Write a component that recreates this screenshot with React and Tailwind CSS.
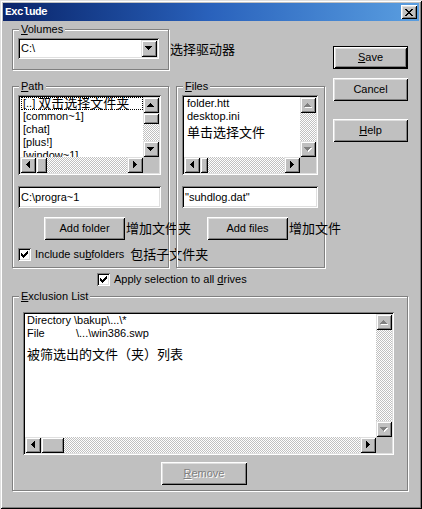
import React from 'react';

const SUNKEN = 'shadow-[inset_1px_1px_0_#808080,inset_-1px_-1px_0_#fff,inset_2px_2px_0_#000,inset_-2px_-2px_0_#dfdfdf]';
const RAISED = 'shadow-[inset_1px_1px_0_#fff,inset_-1px_-1px_0_#000,inset_2px_2px_0_#dfdfdf,inset_-2px_-2px_0_#808080]';
const SCROLL_BTN = 'shadow-[inset_1px_1px_0_#dfdfdf,inset_-1px_-1px_0_#000,inset_2px_2px_0_#fff,inset_-2px_-2px_0_#808080]';
const DITHER = 'bg-[image:repeating-conic-gradient(#fff_0_25%,#c0c0c0_0_50%)] bg-[length:2px_2px]';

const GLYPHS = {
    up: { w: 7, h: 4, d: 'M3 0h1v1h1v1h1v1h1v1H0V3h1V2h1V1h1z' },
    down: { w: 7, h: 4, d: 'M0 0h7v1H6v1H5v1H4v1H3V3H2V2H1V1H0z' },
    left: { w: 4, h: 7, d: 'M3 0h1v7H3V6H2V5H1V4H0V3h1V2h1V1h1z' },
    right: { w: 4, h: 7, d: 'M0 0h1v1h1v1h1v1h1v1H3v1H2v1H1v1H0z' },
};

const CHECK = 'M6 0h1v1H6zM5 1h2v1H5zM0 2h1v1H0zM4 2h3v1H4zM0 3h2v1H0zM3 3h3v1H3zM0 4h5v1H0zM1 5h3v1H1zM2 6h1v1H2z';
const CLOSE_X = 'M0 0h2v1H0zM6 0h2v1H6zM1 1h2v1H1zM5 1h2v1H5zM2 2h4v1H2zM3 3h2v1H3zM2 4h4v1H2zM1 5h2v1H1zM5 5h2v1H5zM0 6h2v1H0zM6 6h2v1H6z';

function Glyph({ dir, disabled }) {
    const g = GLYPHS[dir];
    return (
        <svg width={g.w + 1} height={g.h + 1} shapeRendering="crispEdges">
            {disabled && <path d={g.d} fill="#fff" transform="translate(1 1)" />}
            <path d={g.d} fill={disabled ? '#808080' : '#000'} />
        </svg>
    );
}

function Arrow({ dir, disabled }) {
    return (
        <div className={`w-[16px] h-[16px] shrink-0 bg-[#c0c0c0] flex items-center justify-center ${SCROLL_BTN}`}>
            <Glyph dir={dir} disabled={disabled} />
        </div>
    );
}

function VScroll({ thumb, disabled }) {
    return (
        <div className="w-[16px] shrink-0 flex flex-col">
            <Arrow dir="up" disabled={disabled} />
            <div className={`flex-1 ${DITHER}`}>
                {thumb && <div className={`w-[16px] bg-[#c0c0c0] ${SCROLL_BTN} ${thumb}`} />}
            </div>
            <Arrow dir="down" disabled={disabled} />
        </div>
    );
}

function HScroll({ thumb }) {
    return (
        <div className="flex-1 flex h-[16px]">
            <Arrow dir="left" />
            <div className={`flex-1 flex ${DITHER}`}>
                {thumb && <div className={`h-[16px] bg-[#c0c0c0] ${SCROLL_BTN} ${thumb}`} />}
            </div>
            <Arrow dir="right" />
        </div>
    );
}

function ListBox({ className = '', children, vThumb, hThumb, vDisabled }) {
    return (
        <div className={`bg-white p-[2px] flex flex-col shrink-0 ${SUNKEN} ${className}`}>
            <div className="flex flex-1 min-h-0">
                <div className="flex-1 min-w-0 overflow-hidden whitespace-nowrap">{children}</div>
                <VScroll thumb={vThumb} disabled={vDisabled} />
            </div>
            <div className="flex h-[16px] shrink-0">
                <HScroll thumb={hThumb} />
                <div className="w-[16px] bg-[#c0c0c0]" />
            </div>
        </div>
    );
}

function Group({ label, className = '', children }) {
    return (
        <div className={`border border-[#808080] shadow-[inset_1px_1px_0_#fff,1px_1px_0_#fff] flex flex-col shrink-0 ${className}`}>
            <div className="-mt-[7px] ml-[6px] px-[2px] w-fit h-[13px] bg-[#c0c0c0]">{label}</div>
            {children}
        </div>
    );
}

function Btn({ children, className = '', isDefault, disabled }) {
    return (
        <div className={`h-[23px] shrink-0 bg-[#c0c0c0] ${isDefault ? 'border border-black' : ''} ${className}`}>
            <div className={`w-full h-full flex items-center justify-center ${RAISED} ${disabled ? 'text-[#808080] [text-shadow:1px_1px_0_#fff]' : ''}`}>
                {children}
            </div>
        </div>
    );
}

function Check() {
    return (
        <div className={`w-[13px] h-[13px] shrink-0 bg-white flex items-center justify-center ${SUNKEN}`}>
            <svg width="7" height="7" shapeRendering="crispEdges">
                <path d={CHECK} fill="#000" />
            </svg>
        </div>
    );
}

function Cn({ children, className = '' }) {
    return <span className={`text-[13px] whitespace-nowrap ${className}`}>{children}</span>;
}

function Edit({ children, className = '' }) {
    return (
        <div className={`h-[22px] bg-white flex items-center pl-[3px] shrink-0 ${SUNKEN} ${className}`}>
            {children}
        </div>
    );
}

function TitleBar() {
    return (
        <div className="h-[18px] shrink-0 flex items-center px-[2px] bg-linear-to-r from-[#0a246a] via-[#2a62bc] to-[#5a9ee0]">
            <span className="font-['Liberation_Mono',monospace] font-bold text-white text-[11px] tracking-[-0.6px]">
                Exclude
            </span>
            <div className={`ml-auto w-[16px] h-[14px] bg-[#c0c0c0] flex items-center justify-center ${RAISED}`}>
                <svg width="8" height="7" shapeRendering="crispEdges">
                    <path d={CLOSE_X} fill="#000" />
                </svg>
            </div>
        </div>
    );
}

export default function App() {
    return (
        <div className="w-[422px] h-[509px] p-[3px] flex flex-col bg-[#c0c0c0] text-black text-[11px] leading-[13px] font-['Liberation_Sans','Noto_Sans_CJK_SC',sans-serif] shadow-[inset_1px_1px_0_#dfdfdf,inset_-1px_-1px_0_#000,inset_2px_2px_0_#fff,inset_-2px_-2px_0_#808080]">
            <TitleBar />
            <div className="flex-1 flex flex-col pt-[8px] pl-[9px] pr-[11px]">
                <div className="flex items-start">
                    {/* left side: volumes, path/files, apply */}
                    <div className="w-[313px] shrink-0 flex flex-col">
                        <div className="flex items-center">
                            <Group label={<><u>V</u>olumes</>} className="w-[157px] h-[41px]">
                                <div className={`ml-[5px] mt-[2px] w-[141px] h-[21px] bg-white p-[2px] flex ${SUNKEN}`}>
                                    <div className="flex-1 flex items-center pl-[1px]">{'C:\\'}</div>
                                    <div className={`w-[16px] h-full bg-[#c0c0c0] flex items-center justify-center ${SCROLL_BTN}`}>
                                        <Glyph dir="down" />
                                    </div>
                                </div>
                            </Group>
                            <Cn className="ml-[1px]">选择驱动器</Cn>
                        </div>

                        <div className="flex mt-[16px] gap-[7px]">
                            <Group label={<><u>P</u>ath</>} className="w-[157px] h-[182px]">
                                <ListBox className="ml-[5px] mt-[2px] w-[143px] h-[80px]" vThumb="h-[11px]" hThumb="w-[11px]">
                                    <div className="pl-[1px]">
                                        <div className="h-[13px] border border-dotted border-black px-[1px] flex items-center">
                                            [..] <Cn className="ml-[3px]">双击选择文件夹</Cn>
                                        </div>
                                        <div className="px-[2px]">[common~1]</div>
                                        <div className="px-[2px]">[chat]</div>
                                        <div className="px-[2px]">[plus!]</div>
                                        <div className="px-[2px]">[window~1]</div>
                                    </div>
                                </ListBox>
                                <Edit className="ml-[5px] mt-[11px] w-[143px]">{'C:\\progra~1'}</Edit>
                                <div className="flex items-center mt-[9px] ml-[31px]">
                                    <Btn className="w-[81px]">Add folder</Btn>
                                    <Cn className="ml-[1px]">增加文件夹</Cn>
                                </div>
                                <div className="flex items-center mt-[8px] ml-[5px] h-[13px]">
                                    <Check />
                                    <span className="ml-[4px] whitespace-nowrap">Include su<u>b</u>folders</span>
                                    <Cn className="ml-[6px]">包括子文件夹</Cn>
                                </div>
                            </Group>

                            <Group label={<><u>F</u>iles</>} className="w-[149px] h-[182px]">
                                <ListBox className="ml-[5px] mt-[2px] w-[136px] h-[80px]" vDisabled hThumb="w-[8px]">
                                    <div className="pl-[3px]">
                                        <div>folder.htt</div>
                                        <div>desktop.ini</div>
                                        <Cn className="block mt-[3px]">单击选择文件</Cn>
                                    </div>
                                </ListBox>
                                <Edit className="ml-[5px] mt-[11px] w-[136px]">"suhdlog.dat"</Edit>
                                <div className="flex items-center mt-[9px] ml-[30px]">
                                    <Btn className="w-[81px]">Add files</Btn>
                                    <Cn className="ml-[1px]">增加文件</Cn>
                                </div>
                            </Group>
                        </div>

                        <div className="flex items-center mt-[5px] ml-[85px] h-[13px]">
                            <Check />
                            <span className="ml-[4px] whitespace-nowrap">Apply selection to all <u>d</u>rives</span>
                        </div>
                    </div>

                    {/* right side: dialog buttons */}
                    <div className="ml-[8px] pt-[17px] w-[75px] flex flex-col">
                        <Btn isDefault><span><u>S</u>ave</span></Btn>
                        <Btn className="mt-[9px]">Cancel</Btn>
                        <Btn className="mt-[18px]"><span><u>H</u>elp</span></Btn>
                    </div>
                </div>

                <Group label={<><u>E</u>xclusion List</>} className="mt-[10px] h-[195px]">
                    <ListBox className="ml-[10px] mt-[9px] w-[371px] h-[143px]" vDisabled hThumb="w-[23px]">
                        <div className="pl-[2px]">
                            <div>{'Directory \\bakup\\...\\*'}</div>
                            <div>
                                <span className="inline-block w-[49px]">File</span>
                                {'\\...\\win386.swp'}
                            </div>
                            <Cn className="block mt-[8px]">被筛选出的文件（夹）列表</Cn>
                        </div>
                    </ListBox>
                    <Btn disabled className="ml-[148px] mt-[7px] w-[86px]">
                        <span><u>R</u>emove</span>
                    </Btn>
                </Group>
            </div>
        </div>
    );
}
